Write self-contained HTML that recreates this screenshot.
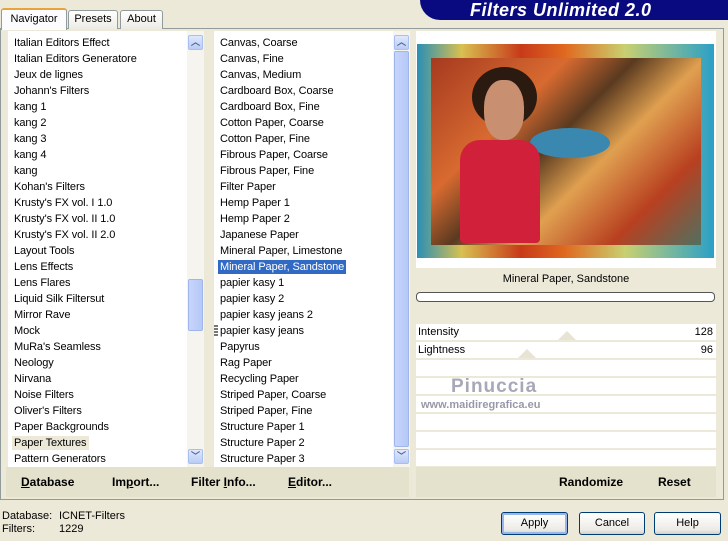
<!DOCTYPE html>
<html><head><meta charset="utf-8"><style>
*{margin:0;padding:0;box-sizing:border-box}
body{width:728px;height:541px;background:#ece9d8;font-family:"Liberation Sans",sans-serif;font-size:11px;color:#000;position:relative;overflow:hidden}
.abs{position:absolute}
.tab{position:absolute;top:10px;height:19px;border:1px solid #919b9c;border-bottom:none;background:linear-gradient(#fff,#ecebe5);font-size:11px;text-align:center;line-height:17px;border-radius:3px 3px 0 0}
.list{position:absolute;top:31px;height:436px;background:#fff;padding-top:4px}
.list div{height:16px;line-height:16px;padding-left:6px;white-space:nowrap;letter-spacing:-0.1px}
.sb{position:absolute;top:31px;width:17px;height:436px;background:#f5f4ee}
.arr{position:absolute;left:1px;width:15px;height:15px;background:linear-gradient(#dfe8fd,#b9ccf7);border:1px solid #a9bff0;border-radius:2px;color:#4d6185;font-size:9px;text-align:center;line-height:13px;font-weight:bold}
.thumb{position:absolute;left:1px;width:15px;background:linear-gradient(90deg,#c7d5fb,#b6c8f7);border:1px solid #9fb5ec;border-radius:2px}
.bar{position:absolute;top:467px;height:30px;background:#e4e1cd}
.bb{position:absolute;top:475px;font-weight:bold;font-size:12px}
.btn{position:absolute;top:512px;height:23px;border:1px solid #003c74;border-radius:3px;background:linear-gradient(#fff,#ecebe6 80%,#d6d0c5);text-align:center;line-height:21px;font-size:11px}
.row{position:absolute;left:416px;width:300px;height:16px;background:#fff;line-height:16px;font-size:11px}
</style></head><body>
<div class="abs" style="left:420px;top:0;width:308px;height:20px;background:#0a0a80;border-radius:0 0 0 22px"></div>
<div class="abs" style="left:470px;top:0;height:20px;line-height:20px;color:#fff;font-weight:bold;font-style:italic;font-size:18px;letter-spacing:0.5px">Filters Unlimited 2.0</div>

<div class="abs" style="left:0;top:28px;width:724px;height:472px;border:1px solid #919b9c;background:#fcfcfe"></div>
<div class="tab" style="left:1px;top:8px;width:66px;height:22px;background:#fcfcfe;border-top:2px solid #e8a33d;z-index:2;line-height:18px">Navigator</div>
<div class="tab" style="left:68px;width:50px">Presets</div>
<div class="tab" style="left:120px;width:43px">About</div>

<div class="abs" style="left:1px;top:29px;width:722px;height:470px;background:#ece9d8"></div>

<div class="list" style="left:8px;width:180px">
<div>Italian Editors Effect</div><div>Italian Editors Generatore</div><div>Jeux de lignes</div><div>Johann's Filters</div><div>kang 1</div><div>kang 2</div><div>kang 3</div><div>kang 4</div><div>kang</div><div>Kohan's Filters</div><div>Krusty's FX vol. I 1.0</div><div>Krusty's FX vol. II 1.0</div><div>Krusty's FX vol. II 2.0</div><div>Layout Tools</div><div>Lens Effects</div><div>Lens Flares</div><div>Liquid Silk Filtersut</div><div>Mirror Rave</div><div>Mock</div><div>MuRa's Seamless</div><div>Neology</div><div>Nirvana</div><div>Noise Filters</div><div>Oliver's Filters</div><div>Paper Backgrounds</div><div><span style="background:#ece9d8;padding:1px 3px 1px 2px;margin-left:-2px">Paper Textures</span></div><div>Pattern Generators</div>
</div>
<div class="sb" style="left:187px"><div class="arr" style="top:4px">︿</div><div class="thumb" style="top:248px;height:52px"></div><div class="arr" style="top:418px">﹀</div></div>

<div class="list" style="left:214px;width:180px">
<div>Canvas, Coarse</div><div>Canvas, Fine</div><div>Canvas, Medium</div><div>Cardboard Box, Coarse</div><div>Cardboard Box, Fine</div><div>Cotton Paper, Coarse</div><div>Cotton Paper, Fine</div><div>Fibrous Paper, Coarse</div><div>Fibrous Paper, Fine</div><div>Filter Paper</div><div>Hemp Paper 1</div><div>Hemp Paper 2</div><div>Japanese Paper</div><div>Mineral Paper, Limestone</div><div><span style="background:#316ac5;color:#fff;padding:1px 2px;margin-left:-2px">Mineral Paper, Sandstone</span></div><div>papier kasy 1</div><div>papier kasy 2</div><div>papier kasy jeans 2</div><div>papier kasy jeans</div><div>Papyrus</div><div>Rag Paper</div><div>Recycling Paper</div><div>Striped Paper, Coarse</div><div>Striped Paper, Fine</div><div>Structure Paper 1</div><div>Structure Paper 2</div><div>Structure Paper 3</div>
</div>
<div class="abs" style="left:214px;top:325px;width:4px;height:12px;background:repeating-linear-gradient(#777 0 2px,#fff 2px 3px)"></div>
<div class="sb" style="left:393px"><div class="arr" style="top:4px">︿</div><div class="thumb" style="top:20px;height:396px"></div><div class="arr" style="top:418px">﹀</div></div>

<div class="abs" style="left:416px;top:31px;width:300px;height:237px;background:#fff"></div>
<div class="abs" style="left:417px;top:44px;width:297px;height:214px;background:linear-gradient(90deg,#2a8fb5,#d8c050 15%,#c83a1a 35%,#e06a20 50%,#c8d070 70%,#2aa0c8 100%)"></div>
<div class="abs" style="left:431px;top:58px;width:270px;height:187px;background:linear-gradient(135deg,#a53a20,#d86a30 30%,#5a3a20 45%,#e0a050 60%,#b84020 80%,#507060)"></div>
<div class="abs" style="left:530px;top:128px;width:80px;height:30px;border-radius:50%;background:#3a88b0"></div>
<div class="abs" style="left:472px;top:67px;width:65px;height:60px;border-radius:50%;background:#2a1a10"></div>
<div class="abs" style="left:484px;top:80px;width:40px;height:60px;border-radius:45%;background:#c89070"></div>
<div class="abs" style="left:460px;top:140px;width:80px;height:103px;background:#d0203a;border-radius:20px 20px 4px 4px"></div>

<div class="abs" style="left:416px;top:268px;width:300px;height:55px;background:#ece9d8"></div>
<div class="abs" style="left:416px;top:273px;width:300px;text-align:center">Mineral Paper, Sandstone</div>
<div class="abs" style="left:416px;top:292px;width:299px;height:10px;border:1px solid #555;border-radius:4px;background:#fff"></div>
<div class="row" style="top:324px"><span style="padding-left:2px">Intensity</span><span style="position:absolute;right:3px">128</span></div>
<div class="row" style="top:342px"><span style="padding-left:2px">Lightness</span><span style="position:absolute;right:3px">96</span></div>
<div class="abs" style="left:558px;top:331px;border:9px solid transparent;border-bottom:9px solid #e8e4d4;border-top:0"></div>
<div class="abs" style="left:518px;top:349px;border:9px solid transparent;border-bottom:9px solid #e8e4d4;border-top:0"></div>
<div class="row" style="top:360px;height:16px"></div>
<div class="row" style="top:378px;height:16px"></div>
<div class="row" style="top:396px;height:16px"></div>
<div class="row" style="top:414px;height:16px"></div>
<div class="row" style="top:432px;height:16px"></div>
<div class="row" style="top:450px;height:16px"></div>
<div class="abs" style="left:451px;top:376px;color:#a8a8b8;font-size:19px;font-weight:bold;letter-spacing:1px">Pinuccia</div>
<div class="abs" style="left:421px;top:399px;color:#9898a8;font-size:11px;font-weight:bold">www.maidiregrafica.eu</div>

<div class="bar" style="left:6px;width:403px"></div>
<div class="bar" style="left:416px;width:300px"></div>
<div class="bb" style="left:21px"><u>D</u>atabase</div>
<div class="bb" style="left:112px">Im<u>p</u>ort...</div>
<div class="bb" style="left:191px">Filter <u>I</u>nfo...</div>
<div class="bb" style="left:288px"><u>E</u>ditor...</div>
<div class="bb" style="left:559px">Randomize</div>
<div class="bb" style="left:658px">Reset</div>

<div class="abs" style="left:2px;top:510px;line-height:13px">Database:<br>Filters:</div>
<div class="abs" style="left:59px;top:510px;line-height:13px">ICNET-Filters<br>1229</div>
<div class="btn" style="left:501px;width:67px;box-shadow:inset 0 0 0 2px #98b6e8">Apply</div>
<div class="btn" style="left:579px;width:66px">Cancel</div>
<div class="btn" style="left:654px;width:67px">Help</div>
</body></html>
